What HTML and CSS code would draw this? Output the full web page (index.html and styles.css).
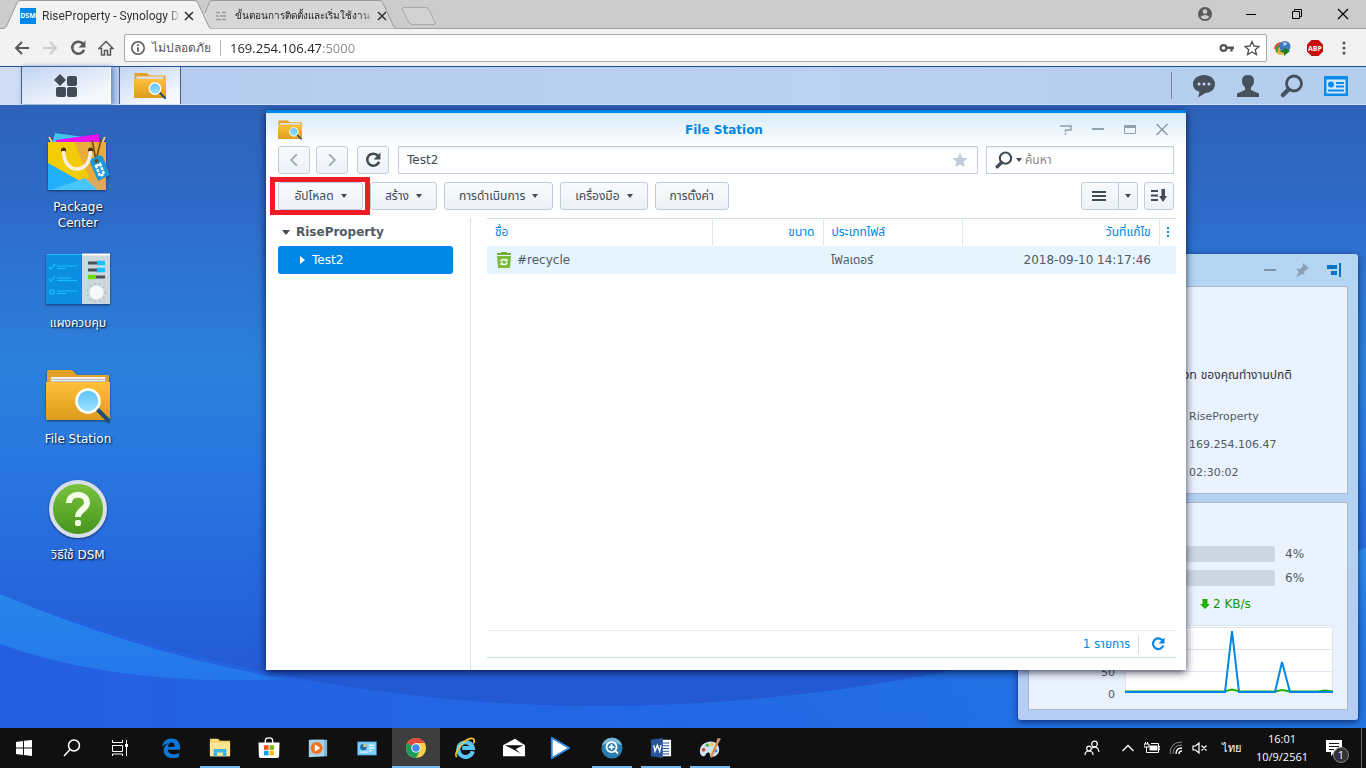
FILE: index.html
```html
<!DOCTYPE html>
<html lang="th">

<head>
	<meta charset="UTF-8">
	<meta name="viewport"
		content="width=device-width, initial-scale=1.0">
	<title>RiseProperty - Synology DiskStation</title>
	<link rel="stylesheet" href="styles.css">
</head>

<body>
	<!-- shared icons -->
	<svg class="defs" width="0" height="0">
		<defs>
			<linearGradient id="gFolder" x1="0" y1="0" x2="0" y2="1">
				<stop offset="0" stop-color="#ffc03c" />
				<stop offset="1" stop-color="#dd9c1c" />
			</linearGradient>
			<linearGradient id="gLens" x1="0" y1="0" x2="0" y2="1">
				<stop offset="0" stop-color="#5cc4f8" />
				<stop offset="1" stop-color="#9fe2ff" />
			</linearGradient>
			<symbol id="folder" viewBox="0 0 64 52">
				<path d="M1 2q0-2 2-2h22q1 0 2 1l4 4h31q1 0 1 1v8H1z" fill="#e3a127" />
				<path d="M5 7h54v6H5z" fill="#f2f2f2" />
				<path d="M4 9.500h56M4 11.500h56" stroke="#bbb" />
				<path d="M0 12h64v37q0 1-1 1H1q-1 0-1-1z" fill="url(#gFolder)" />
				<path d="M52 40l10 10" stroke="#1d4f72" stroke-width="4" stroke-linecap="round" />
				<circle cx="42" cy="31" r="11.500" fill="url(#gLens)" stroke="#fff" stroke-width="2.500" />
			</symbol>
			<symbol id="reload" viewBox="1 1 14 14">
				<path d="M12.500 4.500A5.300 5.300 0 1 0 13.300 9.500" fill="none" stroke="currentColor" stroke-width="2.200" />
				<path d="M14.500 1.500v6h-6z" fill="currentColor" />
			</symbol>
			<symbol id="caret" viewBox="0 0 6 4">
				<path d="M0 0h6L3 4z" fill="currentColor" />
			</symbol>
			<symbol id="lens" viewBox="0 0 24 24">
				<circle cx="14" cy="9.500" r="7.500" fill="none" stroke="currentColor" stroke-width="2.800" />
				<path d="M8.500 15.500L3 21" stroke="currentColor" stroke-width="4.500" stroke-linecap="round" />
			</symbol>
		</defs>
	</svg>

	<header class="browser">
		<div class="tabs">
			<div class="tab active">
				<svg class="tab-shape" viewBox="0 0 208 29" preserveAspectRatio="none">
					<path d="M0 28.500Q3 28 4 25L14 3Q15 .5 18 .5H191Q194 .5 195 3L205 25Q206 28 208 28.500V29H0z" fill="#f2f2f2" />
					<path d="M0 28.500Q3 28 4 25L14 3Q15 .5 18 .5H191Q194 .5 195 3L205 25Q206 28 208 28.500" fill="none" stroke="#999" />
				</svg>
				<span class="favicon">DSM</span>
				<span class="tab-title">RiseProperty - Synology D</span>
				<button class="tab-close" aria-label="Close tab"><svg viewBox="0 0 10 10"><path d="M1 1l8 8M9 1L1 9" stroke="#333" stroke-width="1.600" /></svg></button>
			</div>
			<div class="tab">
				<svg class="tab-shape" viewBox="0 0 208 29" preserveAspectRatio="none">
					<path d="M10 10L13 3Q14 .5 17 .5H183Q186 .5 187 3L197 25Q198 28 201 28.500H12L5 18z" fill="#d6d6d6" />
					<path d="M9 13L13 3Q14 .5 17 .5H183Q186 .5 187 3L197 25Q198 28 201 28.500" fill="none" stroke="#999" />
				</svg>
				<svg class="tab-list" viewBox="0 0 10 10"><path d="M0 1.500h4M6 1.500h4M0 5h3M4 5h6M0 8.500h5M6 8.500h4" stroke="#999" stroke-width="1.500" /></svg>
				<span class="tab-title thai">ขั้นตอนการติดตั้งและเริ่มใช้งาน</span>
				<button class="tab-close" aria-label="Close tab"><svg viewBox="0 0 10 10"><path d="M1 1l8 8M9 1L1 9" stroke="#333" stroke-width="1.600" /></svg></button>
			</div>
			<button class="new-tab" aria-label="New tab"><svg viewBox="0 0 36 18"><path d="M1 2q0-1.500 2-1.500h22q2 0 3 2l6 13q1 2-1 2H11q-2 0-3-2z" fill="#d2d2d2" stroke="#a8a8a8" /></svg></button>
			<div class="win-buttons">
				<button aria-label="Profile"><svg viewBox="0 0 16 16"><circle cx="8" cy="8" r="7" fill="#5a5a5a" /><circle cx="8" cy="5.600" r="2.300" fill="#ccc" /><path d="M3.500 11q4.500-4 9 0q-4.500 4.500-9 0" fill="#ccc" /></svg></button>
				<button aria-label="Minimize"><svg viewBox="0 0 16 16"><path d="M3 8.500h10" stroke="#000" /></svg></button>
				<button aria-label="Restore"><svg viewBox="0 0 16 16"><path d="M3.500 5.500h7v7h-7zM5.500 5V3.500h7v7H11" fill="none" stroke="#000" /></svg></button>
				<button aria-label="Close"><svg viewBox="0 0 16 16"><path d="M3 3l10 10M13 3L3 13" stroke="#000" stroke-width="1.200" /></svg></button>
			</div>
		</div>
		<div class="toolbar">
			<button aria-label="Back"><svg viewBox="0 0 16 16"><path d="M15 8H2M8 2L2 8l6 6" fill="none" stroke="#5a5a5a" stroke-width="2" /></svg></button>
			<button aria-label="Forward"><svg viewBox="0 0 16 16"><path d="M1 8h13M8 2l6 6-6 6" fill="none" stroke="#ccc" stroke-width="2" /></svg></button>
			<button class="grey" aria-label="Reload"><svg viewBox="0 0 16 16"><use href="#reload" /></svg></button>
			<button aria-label="Home"><svg viewBox="0 0 16 16"><path d="M1 8.500L8 1.500l7 7h-2.500V15h-3v-4.500h-3V15h-3V8.500z" fill="none" stroke="#5a5a5a" stroke-width="1.500" /></svg></button>
			<div class="address">
				<svg class="info" viewBox="0 0 16 16"><circle cx="8" cy="8" r="6.200" fill="none" stroke="#555" stroke-width="1.500" /><path d="M8 4.200v1.800M8 7.200v4.500" stroke="#555" stroke-width="1.700" /></svg>
				<label for="url">ไม่ปลอดภัย</label>
				<input id="url" type="text" value="169.254.106.47:5000">
				<svg class="key" viewBox="0 0 16 16"><circle cx="4.500" cy="8" r="2.900" fill="none" stroke="#555" stroke-width="2.200" /><path d="M8 7.700h7M12.500 8v3.500" stroke="#555" stroke-width="2.400" /></svg>
				<svg viewBox="0 0 16 16"><path d="M8 1.500l2 4.500 5 .5-3.700 3.300 1.100 4.700L8 12l-4.400 2.500 1.100-4.700L1 6.500 6 6z" fill="none" stroke="#555" stroke-width="1.400" /></svg>
			</div>
			<div class="extensions">
				<svg viewBox="0 0 18 16"><circle cx="7" cy="9" r="6" fill="#e5b43b" /><path d="M1 9q1-6 7-6" stroke="#d54a2f" stroke-width="2" fill="none" /><path d="M3 12q-1-5 4-7" stroke="#3a9b3c" stroke-width="2" fill="none" /><circle cx="11" cy="6.500" r="5.500" fill="#3f78c4" /><path d="M9 3q3-2 4 1l-3 2z" fill="#b5d9f1" /><path d="M5 11l5-1V7l6 4-6 5v-3z" fill="#188020" /></svg>
				<svg viewBox="0 0 18 18"><path d="M5.500 1h7L17 5.500v7L12.500 17h-7L1 12.500v-7z" fill="#c70d0d" /><text x="9" y="12" text-anchor="middle" class="abp">ABP</text></svg>
				<button aria-label="Menu"><svg viewBox="0 0 16 16"><g fill="#5a5a5a"><circle cx="6" cy="3" r="1.600" /><circle cx="6" cy="8" r="1.600" /><circle cx="6" cy="13" r="1.600" /></g></svg></button>
			</div>
		</div>
	</header>

	<nav class="dsm-bar">
		<span class="bar-edge"></span>
		<button class="bar-menu" aria-label="Main menu">
			<svg viewBox="0 0 24 24"><g fill="#414b55"><path d="M6 0l6 6-6 6-6-6z" /><rect x="13" y="2" width="10" height="10" rx="2" /><rect x="2" y="13" width="10" height="10" rx="2" /><rect x="13" y="13" width="10" height="10" rx="2" /></g></svg>
		</button>
		<button class="bar-app" aria-label="File Station"><svg viewBox="0 0 64 52"><use href="#folder" /></svg></button>
		<div class="bar-tray">
			<button aria-label="Notifications"><svg viewBox="0 0 24 24"><path d="M12 1c6 0 11 3.800 11 9s-4.500 9-9.500 9L6 23.500 7.500 18C3 16.500 1 13.500 1 10c0-5.200 5-9 11-9z" fill="#46515d" /><g fill="#bcd2ef"><circle cx="7" cy="10" r="1.500" /><circle cx="12" cy="10" r="1.500" /><circle cx="17" cy="10" r="1.500" /></g></svg></button>
			<button aria-label="Options"><svg viewBox="0 0 24 24"><path d="M12 1c4 0 6 2 6 5.500 0 3-1 5-3 7V16l8 3.500V23H1v-3.500L9 16v-2.500c-2-2-3-4-3-7C6 3 8 1 12 1z" fill="#46515d" /></svg></button>
			<button aria-label="Search"><svg viewBox="0 0 24 24"><use href="#lens" /></svg></button>
			<button aria-label="Widgets"><svg viewBox="0 0 24 24"><path d="M0 2h24v20H0z" fill="#0a8be8" /><path d="M2.500 5.500h19v14h-19z" fill="#d5e7fa" /><g fill="#0a8be8"><circle cx="7" cy="10.500" r="3" /><path d="M12 8h8v2h-8zM12 11.500h8v2h-8zM4 15.500h16v2H4z" /></g></svg></button>
		</div>
	</nav>

	<main class="desktop">
		<svg class="wallpaper" viewBox="0 0 1366 623" preserveAspectRatio="none">
			<defs>
				<linearGradient id="gLow" x1="0" y1="0" x2="1" y2="0">
					<stop offset="0" stop-color="#255fe0" />
					<stop offset=".5" stop-color="#2268e4" />
					<stop offset="1" stop-color="#2276e2" />
				</linearGradient>
				<linearGradient id="gSliver" x1="0" y1="0" x2="0" y2="1">
					<stop offset="0" stop-color="#2785ea" />
					<stop offset="1" stop-color="#2477ec" />
				</linearGradient>
				<linearGradient id="gSwoosh" x1="0" y1="0" x2="0" y2="1">
					<stop offset="0" stop-color="#2c8fea" stop-opacity=".9" />
					<stop offset="1" stop-color="#2268e4" stop-opacity="0" />
				</linearGradient>
			</defs>
			<path d="M0 489C200 565 400 601 600 601C850 601 1100 545 1366 443V623H0z" fill="url(#gLow)" />
			<path d="M600 601C850 601 1100 545 1366 443V623H600z" fill="url(#gSwoosh)" />
			<path d="M0 489Q140 548 285 574Q120 582 0 539z" fill="url(#gSliver)" />
		</svg>

		<div class="shortcuts">
			<a class="shortcut" href="#">
				<svg viewBox="0 -2 64 64">
					<path d="M6 11l3-10 44 6v4H6z" fill="#40c5f2" />
					<path d="M10 8l43-6 1 10H10z" fill="#ea12f2" />
					<path d="M3 5l3 5M59 5l-3 6" stroke="#e9cb8f" stroke-width="2" />
					<path d="M2 10h58v47q0 1-1 1H3q-1 0-1-1z" fill="#f3cc08" />
					<path d="M28 10h32v47H48z" fill="#e9ab3b" />
					<path d="M2 31l48 27H2z" fill="#22b0fb" />
					<path d="M5 58l34-12 13 12z" fill="#48c6fa" />
					<path d="M39 46l13 12h8V50z" fill="#dfa85c" />
					<circle cx="17.500" cy="18" r="2.500" fill="#503300" />
					<circle cx="44.500" cy="18" r="2.500" fill="#503300" />
					<path d="M17.500 19c0 24 27 24 27 0" fill="none" stroke="#fdf0df" stroke-width="3.500" />
					<path d="M46 8l4 20M55 8l-5 20" fill="none" stroke="#664a14" stroke-width="1.500" />
					<path d="M45 27l9-4 3 2 7 18-12 6-8-19z" fill="#1a9ad8" />
					<circle cx="50.500" cy="29" r="2" fill="#6b4d12" />
					<path d="M50 34l4-2 4 10-4 2z" fill="none" stroke="#fff" stroke-width="2.500" stroke-dasharray="3 1" />
				</svg>
				<span>Package Center</span>
			</a>
			<a class="shortcut" href="#">
				<svg viewBox="0 0 64 64">
					<rect y="8" width="36" height="50" fill="#0b8ee0" />
					<rect x="36" y="8" width="28" height="50" fill="#cdd7de" />
					<path d="M0 8.500h36" stroke="#22b8f2" /><path d="M36 8.500h28" stroke="#fff" stroke-width="2" />
					<g fill="none" stroke="#16c2fa" stroke-width="1.200"><path d="M3 21l2 2 4-5M3 33l2 2 4-5M4 44h4v4H4zM11 20h20M11 22.500h9M11 32h14M11 34.500h20M11 45h20M11 47.500h9" /></g>
					<path d="M42 17h17M42 24h17M42 31h17" stroke="#47525b" stroke-width="3" />
					<path d="M51 17h8M51 24h8" stroke="#19c0fb" stroke-width="4.500" />
					<path d="M42 31h8" stroke="#6fd808" stroke-width="4.500" />
					<circle cx="50.500" cy="46.500" r="9" fill="none" stroke="#9ba9b2" stroke-width="1.500" stroke-dasharray="1 4" />
					<circle cx="50.500" cy="46.500" r="7" fill="#f6f9fa" />
				</svg>
				<span>แผงควบคุม</span>
			</a>
			<a class="shortcut" href="#">
				<svg viewBox="0 0 64 64"><use href="#folder" y="8" width="64" height="52" /></svg>
				<span>File Station</span>
			</a>
			<a class="shortcut" href="#">
				<svg viewBox="0 0 64 64">
					<defs>
						<linearGradient id="gHelp" x1="0" y1="0" x2="0" y2="1">
							<stop offset="0" stop-color="#7cc440" />
							<stop offset="1" stop-color="#44931c" />
						</linearGradient>
					</defs>
					<circle cx="32" cy="31" r="27" fill="url(#gHelp)" stroke="#d8dfea" stroke-width="4" />
					<path d="M23 25c0-11 18-11 18 0 0 6-9 7-9 14" fill="none" stroke="#f4ffe8" stroke-width="6" />
					<rect x="29" y="42" width="6" height="6" rx="2" fill="#f4ffe8" />
				</svg>
				<span>วิธีใช้ DSM</span>
			</a>
		</div>

		<aside class="widgets">
			<div class="widget-head">
				<button aria-label="Minimize"><svg viewBox="0 0 16 16"><path d="M2 8h12" stroke="#7f95ab" stroke-width="2" /></svg></button>
				<button aria-label="Pin"><svg viewBox="0 0 16 16"><path d="M9 1l6 5-2 1-3 3 .5 3L8 12l-6 3 3-5-3-3h4l3-3z" fill="#8ba1b8" /></svg></button>
				<button aria-label="Dock right"><svg viewBox="0 0 16 16"><path d="M1 3h10v4H1zM5 9h6v4H5zM13 1h2v14h-2z" fill="#0a73c4" /></svg></button>
			</div>
			<section class="panel health">
				<p class="health-text">on ของคุณทำงานปกติ</p>
				<p class="health-value">RiseProperty</p>
				<p class="health-value">169.254.106.47</p>
				<p class="health-value">02:30:02</p>
			</section>
			<section class="panel monitor">
				<div class="meter"><span class="track"></span><span>4%</span></div>
				<div class="meter"><span class="track"></span><span>6%</span></div>
				<p class="speed"><svg viewBox="0 0 10 10"><path d="M2.500 0h5v5H10L5 10 0 5h2.500z" fill="#1eb000" /></svg>2 KB/s</p>
				<div class="chart">
					<div class="axis"><span>50</span><span>0</span></div>
					<svg viewBox="0 0 208 68" preserveAspectRatio="none">
						<path d="M.5 0V68H207.500V.5H0" fill="#fff" stroke="#dce6f0" />
						<path d="M0 2.500h208M0 24.500h208M0 46.500h208" stroke="#dce6f0" />
						<path d="M0 66.500h99l8-2 8 2h35l7-1.500 8 1.500h28l7-1 8 1" fill="none" stroke="#1eb000" stroke-width="2" />
						<path d="M0 67h100L107 6l7 61h36l7-30 8 30h43" fill="none" stroke="#0086e5" stroke-width="2" />
					</svg>
				</div>
			</section>
		</aside>

		<section class="window">
			<div class="window-head">
				<svg class="window-icon" viewBox="0 0 64 52"><use href="#folder" /></svg>
				<h1>File Station</h1>
				<div class="window-tools">
					<button aria-label="Help"><svg viewBox="0 0 14 14"><path d="M1 3h11v4H6.500v2M6.500 10v2" fill="none" stroke="#8fa0ae" stroke-width="1.500" /></svg></button>
					<button aria-label="Minimize"><svg viewBox="0 0 14 14"><path d="M1 6h12" stroke="#8fa0ae" stroke-width="2" /></svg></button>
					<button aria-label="Maximize"><svg viewBox="0 0 14 14"><path d="M1.500 3v7.500h11V3" fill="none" stroke="#8fa0ae" /><path d="M1 3.500h12" stroke="#8fa0ae" stroke-width="3" /></svg></button>
					<button aria-label="Close"><svg viewBox="0 0 14 14"><path d="M1.500 1l11 11M12.500 1l-11 11" stroke="#8fa0ae" stroke-width="1.700" /></svg></button>
				</div>
			</div>

			<div class="path-row">
				<button class="btn nav-btn" aria-label="Back"><svg viewBox="0 0 14 14"><path d="M9.500 2L4.500 7l5 5" fill="none" stroke="#98a4ad" stroke-width="1.500" /></svg></button>
				<button class="btn nav-btn" aria-label="Forward"><svg viewBox="0 0 14 14"><path d="M4.500 2l5 5-5 5" fill="none" stroke="#98a4ad" stroke-width="1.500" /></svg></button>
				<button class="btn nav-btn refresh" aria-label="Refresh"><svg viewBox="0 0 16 16"><use href="#reload" /></svg></button>
				<div class="field path">
					<input type="text" value="Test2" aria-label="Path">
					<svg viewBox="0 0 16 16"><path d="M8 .5l2.200 5.200 5.600.5-4.300 3.600 1.300 5.500L8 12.400l-4.800 2.900 1.300-5.500L.2 6.200l5.600-.5z" fill="#c0ccd8" /></svg>
				</div>
				<div class="field search">
					<svg class="search-icon" viewBox="0 0 24 24"><use href="#lens" /></svg>
					<svg class="caret"><use href="#caret" /></svg>
					<input type="text" placeholder="ค้นหา" aria-label="ค้นหา">
				</div>
			</div>

			<div class="action-row">
				<div class="highlighted">
					<button class="btn wide">อัปโหลด<svg class="caret"><use href="#caret" /></svg></button>
					<span class="highlight"></span>
				</div>
				<button class="btn">สร้าง<svg class="caret"><use href="#caret" /></svg></button>
				<button class="btn">การดำเนินการ<svg class="caret"><use href="#caret" /></svg></button>
				<button class="btn">เครื่องมือ<svg class="caret"><use href="#caret" /></svg></button>
				<button class="btn">การตั้งค่า</button>
				<div class="view-buttons">
					<button class="btn view-list" aria-label="List view"><svg viewBox="0 0 16 16"><path d="M0 4h14M0 8h14M0 12h14" stroke="#414b55" stroke-width="2" /></svg></button>
					<button class="btn view-more" aria-label="View options"><svg class="caret"><use href="#caret" /></svg></button>
					<button class="btn sort" aria-label="Sort"><svg viewBox="0 0 16 16"><path d="M0 3h7M0 7.500h7M0 12h7" stroke="#414b55" stroke-width="2" /><path d="M10.500 1h3.500v7H16l-4 6-4-6h2.500z" fill="#414b55" /></svg></button>
				</div>
			</div>

			<div class="window-body">
				<div class="tree">
					<div class="tree-root"><svg viewBox="0 0 8 5"><path d="M0 0h8L4 5z" fill="#414b55" /></svg>RiseProperty</div>
					<a class="tree-item" href="#"><svg viewBox="0 0 5 8"><path d="M0 0v8l5-4z" fill="#fff" /></svg>Test2</a>
				</div>
				<div class="files">
					<table>
						<colgroup>
							<col>
							<col class="col-size">
							<col class="col-type">
							<col class="col-date">
							<col class="col-menu">
						</colgroup>
						<thead>
							<tr>
								<th>ชื่อ</th>
								<th class="right">ขนาด</th>
								<th>ประเภทไฟล์</th>
								<th class="right">วันที่แก้ไข</th>
								<th class="more"><svg viewBox="0 0 3 10"><path d="M0 0h2v2H0zM0 4h2v2H0zM0 8h2v2H0z" fill="#0086e5" /></svg></th>
							</tr>
						</thead>
						<tbody>
							<tr>
								<td>
									<span class="file-name">
										<svg viewBox="0 0 14 16"><path d="M0 1h4V0h6v1h4v2H0z" fill="#6fae33" /><path d="M0 4h14l-1 12H1z" fill="#7cbb3b" /><path d="M4 9.500q0-2 3-2 1.500 0 2.500 1M10 10.500q0 2-3 2-1.500 0-2.500-1" fill="none" stroke="#fff" stroke-width="1.400" /><path d="M10.500 6.500v3h-3zM3.500 13.500v-3h3z" fill="#fff" /></svg>#recycle
									</span>
								</td>
								<td></td>
								<td>โฟลเดอร์</td>
								<td class="right">2018-09-10 14:17:46</td>
								<td></td>
							</tr>
						</tbody>
					</table>
					<div class="status">
						<span>1 รายการ</span>
						<button aria-label="Refresh"><svg viewBox="0 0 16 16"><use href="#reload" /></svg></button>
					</div>
				</div>
			</div>
		</section>
	</main>

	<footer class="taskbar">
		<div class="task-system">
			<button aria-label="Start"><svg viewBox="0 0 24 24"><path d="M4 6l7-1v6.500H4zM12 4.800L20 4v7.500h-8zM4 12.500h7V19l-7-1zM12 12.500h8V20l-8-1z" fill="#fff" /></svg></button>
			<button aria-label="Search"><svg viewBox="0 0 24 24"><circle cx="14" cy="9.500" r="5.500" fill="none" stroke="#fff" stroke-width="1.500" /><path d="M10 13.500L4 20" stroke="#fff" stroke-width="1.500" /></svg></button>
			<button aria-label="Task view"><svg viewBox="0 0 24 24"><path d="M4.500 4v2.500h10V4M4.500 9.500h10v6h-10zM4.500 20v-2h10v2M18.500 4v16" fill="none" stroke="#fff" /><path d="M17 8h3v3h-3z" fill="#fff" /></svg></button>
		</div>
		<div class="task-apps">
			<button aria-label="Edge"><svg viewBox="0 0 24 24"><path d="M2 11C3 5 7 1.500 12.500 1.500 19 1.500 22 6 22 11v3H8.500c.3 3.500 3 5 6.500 5 2.300 0 4.300-.6 6-1.700v4.200C19 22.600 17 23 14 23 8 23 4 20 4 14.500 4 11 6 8.500 9 7c-3 .3-5.500 2-7 4zM8.500 10.500H16c0-3-1.300-4.500-3.500-4.500S9 8 8.500 10.500z" fill="#0a78d7" /></svg></button>
			<button class="open" aria-label="File Explorer"><svg viewBox="0 0 24 24"><path d="M1 2h9l2 2h11v17H1z" fill="#f5cf5c" /><path d="M1 6h22v15H1z" fill="#ffe694" /><path d="M5 21v-8h14v8h-4v-4H9v4z" fill="#3fb4ea" /><path d="M3 3.500h6" stroke="#fff3b8" /></svg></button>
			<button aria-label="Store"><svg viewBox="0 0 24 24"><path d="M8 7V4q0-3 4-3t4 3v3" fill="none" stroke="#fff" stroke-width="1.500" /><path d="M.5 6h23l-.5 15q0 2-2 2H3q-2 0-2-2z" fill="#fff" /><path d="M6.500 9h5v5h-5z" fill="#f25022" /><path d="M12.500 9h5v5h-5z" fill="#7fba00" /><path d="M6.500 15h5v5h-5z" fill="#00a4ef" /><path d="M12.500 15h5v5h-5z" fill="#ffb900" /></svg></button>
			<button aria-label="Media Player"><svg viewBox="0 0 24 24"><path d="M5 3h17v18H5z" fill="#79b3d3" /><path d="M2 3h17v18l-17 1z" fill="#a7d3ea" /><circle cx="10.500" cy="12" r="6.500" fill="#f2731c" /><path d="M8.500 8l6 4-6 4z" fill="#fff" /></svg></button>
			<button aria-label="Control Panel"><svg viewBox="0 0 24 24"><path d="M1.500 5h21v15h-21z" fill="#55b8ee" /><path d="M2.500 6h19v13h-19z" fill="#7ed0f8" /><circle cx="8" cy="11" r="3.500" fill="#1d6fb0" /><path d="M8 11V7.500A3.500 3.500 0 0 1 11.500 11z" fill="#f3c45c" /><path d="M14 9h6M14 12h6M14 15h3M5 16.500h8" stroke="#e8f8ff" stroke-width="1.500" /></svg></button>
			<button class="open current" aria-label="Chrome"><svg viewBox="0 0 24 24"><circle cx="12" cy="12" r="11" fill="#fcd04b" /><path d="M12 12L2.500 6.500A11 11 0 0 1 21.500 6.500H12z" fill="#dc4b3e" /><path d="M2.500 6.500A11 11 0 0 0 12 23l4.500-8.500L12 12z" fill="#1b9e5a" /><circle cx="12" cy="12" r="5.200" fill="#fff" /><circle cx="12" cy="12" r="4.100" fill="#4688f4" /></svg></button>
			<button aria-label="Internet Explorer"><svg viewBox="0 0 24 24"><path d="M20.500 15.500A8 8 0 1 1 20.500 12H9" fill="none" stroke="#58c5f2" stroke-width="4.500" /><path d="M3 22C-2 17 14-1 21 2c2 1 1 4 0 5" fill="none" stroke="#f5c52c" stroke-width="1.800" /></svg></button>
			<button aria-label="Mail"><svg viewBox="1 1 24 22"><path d="M1 9L14 2l11 7v12H1z" fill="#fff" /><path d="M3 9h20l-8 4 5 5-7-4z" fill="#101010" /></svg></button>
			<button class="video" aria-label="Video"><svg viewBox="0 0 24 24"><path d="M3 1l19 11L3 23z" fill="#fff" stroke="#2f8fe0" stroke-width="2" stroke-linejoin="round" /></svg></button>
			<button class="open" aria-label="Magnifier"><svg viewBox="0 0 24 24"><circle cx="12" cy="12" r="11.500" fill="#2b7db0" /><path d="M1 9a11.500 11.500 0 0 1 22 0q-11-5-22 0" fill="#7ab5d6" /><circle cx="11.500" cy="11" r="5.500" fill="none" stroke="#fff" stroke-width="2" /><path d="M11.500 8v6M8.500 11h6M15.500 15l3 3" stroke="#fff" stroke-width="2" /></svg></button>
			<button class="open" aria-label="Word"><svg viewBox="0 0 24 24"><path d="M12 3h11v18H12z" fill="#fff" /><path d="M14 6.500h7M14 9.500h7M14 12.500h7M14 15.500h7M14 18.500h7" stroke="#2a5699" stroke-width="1.200" /><path d="M1 3l13-2v22L1 21z" fill="#2a5699" /><path d="M4 9l1.500 6.500L8 9l2.500 6.500L12 9" fill="none" stroke="#fff" stroke-width="1.500" /></svg></button>
			<button class="open" aria-label="Paint"><svg viewBox="0 0 24 24"><path d="M1 15C1 9 7 5 13 5s9 4 9 9-5 9-9 7c-2-1 0-4-3-4s-2 4-5 4-4-3-4-6z" fill="#cfe4f2" /><circle cx="5" cy="14" r="2" fill="#e03c31" /><circle cx="9" cy="9" r="2" fill="#5ab83c" /><circle cx="14" cy="8" r="1.800" fill="#f1c431" /><circle cx="18" cy="15" r="2" fill="#3c88d0" /><path d="M13 22L20 6" stroke="#e0903c" stroke-width="2.500" /><path d="M19 6l1-5 4 1-3 5z" fill="#c89868" /></svg></button>
		</div>
		<div class="tray">
			<button aria-label="People"><svg viewBox="0 0 16 16"><g fill="none" stroke="#fff" stroke-width="1.200"><circle cx="10.500" cy="4" r="2.800" /><circle cx="5" cy="8.500" r="2.300" /><path d="M1 15q0-4 4-4t4 4M8 8q6-3 7 4" /></g></svg></button>
			<button class="tray-up" aria-label="Hidden icons"><svg viewBox="0 0 16 16"><path d="M2.500 11L8 5.500l5.500 5.500" fill="none" stroke="#fff" stroke-width="1.300" /></svg></button>
			<button aria-label="Battery"><svg viewBox="0 0 16 16"><path d="M5.500 5.500h8v5h-8z" fill="#fff" /><path d="M4 12.500h10.500v-9H7M14.500 6.500H16v3h-1.500M0 4h5v3H0zM1.500 2v2M3.500 2v2M2.500 7v5.500H5" fill="none" stroke="#fff" /></svg></button>
			<button aria-label="Network"><svg viewBox="0 0 16 16"><g fill="none"><path d="M2 14Q2 2 14 2M5 14Q5 5 14 5" stroke="#8a8a8a" /><path d="M8 14Q8 8 14 8M11 14Q11 11 14 11" stroke="#fff" stroke-width="1.300" /></g></svg></button>
			<button aria-label="Volume"><svg viewBox="0 0 16 16"><path d="M1 6h2.500L7 3v10L3.500 10H1zM9.500 5.500l5 5M14.500 5.500l-5 5" fill="none" stroke="#fff" stroke-width="1.200" /></svg></button>
			<button class="lang">ไทย</button>
			<div class="clock"><span>16:01</span><span>10/9/2561</span></div>
			<button class="notice" aria-label="Notifications"><svg viewBox="0 0 16 16"><path d="M0 0h16v12H9l-4 4v-4H0z" fill="#fff" /><path d="M3 3.500h10M3 6.500h10M3 9.500h5" stroke="#101010" /></svg><span class="badge">1</span></button>
		</div>
	</footer>
</body>

</html>
```
FILE: styles.css
```css
:root {
	--blue: #0086e5;
	--text: #505a64;
	--line: #c0ccda;
	--ui: "DejaVu Sans", "Noto Sans", "Noto Sans Thai", sans-serif;
	--chrome: "Open Sans", "Noto Sans", sans-serif;
}

* {
	box-sizing: border-box;
}

body {
	margin: 0;
	min-height: 100vh;
	display: flex;
	flex-direction: column;
	font-family: var(--ui);
	font-size: 12px;
	color: var(--text);
	overflow: hidden;
}

button {
	display: flex;
	align-items: center;
	justify-content: center;
	margin: 0;
	padding: 0;
	border: 0;
	background: none;
	font: inherit;
	color: inherit;
	cursor: pointer;
}

input {
	min-width: 0;
	flex: 1;
	padding: 0;
	border: 0;
	outline: 0;
	background: none;
	font: inherit;
	color: inherit;
}

p {
	margin: 0;
}

svg {
	display: block;
	flex: none;
	width: 16px;
	height: 16px;
}

a {
	color: inherit;
	text-decoration: none;
}

.defs {
	position: absolute;
	width: 0;
	height: 0;
}

/* browser chrome */
.browser {
	font-family: var(--chrome);
	color: #333;
	background: #f2f2f2;
}

.tabs {
	display: flex;
	height: 29px;
	padding-left: 3px;
	background: #ccc;
	border-bottom: 1px solid #a0a0a0;
}

.tab {
	position: relative;
	display: flex;
	align-items: center;
	width: 208px;
	height: 29px;
	padding: 2px 14px 0 17px;
	margin-right: -15px;
}

.tab.active {
	z-index: 1;
}

.tab-shape {
	position: absolute;
	left: 0;
	top: 0;
	width: 100%;
	height: 100%;
}

.favicon,
.tab-title,
.tab-close,
.tab-list {
	position: relative;
}

.favicon {
	width: 16px;
	height: 16px;
	background: var(--blue);
	color: #fff;
	font-size: 7px;
	font-weight: 700;
	line-height: 16px;
	text-align: center;
}

.tab-list {
	width: 10px;
	height: 10px;
	margin: 0 3px;
}

.tab-title {
	flex: 1;
	margin-left: 6px;
	font-family: Roboto, "Open Sans", sans-serif;
	white-space: nowrap;
	-webkit-mask-image: linear-gradient(to right, #000 90%, transparent);
	mask-image: linear-gradient(to right, #000 90%, transparent);
}

.tab-title.thai {
	font-size: 10px;
	color: #222;
}

.tab-close {
	width: 16px;
	height: 16px;
}

.tab-close svg {
	width: 10px;
	height: 10px;
}

.new-tab {
	margin: 3px 0 0 12px;
}

.new-tab svg {
	width: 36px;
	height: 18px;
}

.win-buttons {
	display: flex;
	margin-left: auto;
}

.win-buttons button {
	width: 46px;
	height: 27px;
}

.toolbar {
	display: flex;
	align-items: center;
	height: 37px;
	padding: 0 12px 0 8px;
}

.toolbar > button {
	width: 28px;
	height: 28px;
}

.toolbar > button.grey {
	color: #5a5a5a;
}

.address {
	flex: 1;
	display: flex;
	align-items: center;
	gap: 9px;
	height: 28px;
	margin: 0 7px 0 4px;
	padding: 0 6px 0 5px;
	background: #fff;
	border: 1px solid #a8a8a8;
	border-radius: 2px;
}

.address .info {
	margin-right: -3px;
}

.address label {
	padding-right: 9px;
	border-right: 1px solid #bbb;
	line-height: 16px;
	color: #555;
}

/* host dark, port grey */
.address input {
	font-size: 13px;
	color: transparent;
	background: linear-gradient(to right, #222 91px, #888 91px);
	-webkit-background-clip: text;
	background-clip: text;
}

.extensions {
	display: flex;
	align-items: center;
	gap: 14px;
}

.extensions svg {
	width: 18px;
	height: 18px;
}

.extensions button svg {
	width: 16px;
	height: 16px;
}

.abp {
	font-size: 7px;
	font-weight: 700;
	fill: #fff;
}

/* DSM bar */
.dsm-bar {
	display: flex;
	height: 39px;
	border-top: 1px solid #1f4f95;
	border-bottom: 1px solid #d4e0f4;
	background: linear-gradient(to right, #b4caee, #bad2ef 60%, #b4cdec);
}

.bar-edge {
	width: 21px;
	background: #cfdcf4;
}

.bar-menu,
.bar-app {
	border-left: 1px solid #4b6280;
	border-right: 1px solid #fff;
	background: linear-gradient(160deg, #c2d4f2, #f5f8fe 80%);
}

.bar-menu {
	width: 90px;
	box-shadow: 2px 0 5px #5f7fb5;
}

.bar-menu svg {
	width: 24px;
	height: 24px;
}

.bar-app {
	width: 62px;
	margin-left: 8px;
	border-right-color: #4b6280;
}

.bar-app svg {
	width: 32px;
	height: 26px;
}

.bar-tray {
	display: flex;
	align-items: center;
	align-self: center;
	gap: 20px;
	height: 27px;
	margin-left: auto;
	padding: 0 18px 0 20px;
	border-left: 1px solid #7489a4;
	color: #46515d;
}

.bar-tray svg {
	width: 24px;
	height: 24px;
}

/* desktop */
.desktop {
	position: relative;
	flex: 1;
	overflow: hidden;
	background: linear-gradient(to bottom, #2d62b9 0, #2e6cca 18%, #2b80dc 42%, #2a78e0 56%, #2667dc 76%, #2258d2 95%);
}

.wallpaper {
	position: absolute;
	width: 100%;
	height: 100%;
}

.shortcuts {
	position: absolute;
	left: 28px;
	top: 25px;
	display: flex;
	flex-direction: column;
	width: 100px;
}

.shortcut {
	display: flex;
	flex-direction: column;
	align-items: center;
	gap: 5px;
	height: 116px;
	color: #fff;
	line-height: 16px;
	text-align: center;
	text-shadow: 1px 1px 2px #000;
}

.shortcut svg {
	width: 64px;
	height: 64px;
	filter: drop-shadow(0 1px 1px rgba(0, 0, 0, 0.5));
}

.shortcut span {
	width: 80px;
}

.widgets {
	position: absolute;
	right: 8px;
	top: 149px;
	width: 340px;
	padding: 0 10px 10px;
	background: linear-gradient(to bottom, #b4d6f3, #b5cdf4);
	border-radius: 3px;
	box-shadow: 0 2px 6px rgba(0, 0, 40, 0.6);
}

.widget-head {
	display: flex;
	align-items: center;
	justify-content: flex-end;
	gap: 16px;
	height: 32px;
	padding-right: 6px;
}

.panel {
	background: #eaf2fd;
	border: 1px solid #abb9c9;
}

.health {
	height: 208px;
	padding: 78px 0 0 160px;
	font-size: 11px;
}

.health-text {
	margin: 0 0 18px -7px;
	line-height: 20px;
	color: #333;
	font-size: 12px;
}

.health-value {
	line-height: 28px;
}

.monitor {
	height: 208px;
	margin-top: 8px;
	padding: 43px 14px 0 16px;
}

.meter {
	display: flex;
	align-items: center;
	gap: 10px;
	height: 16px;
	margin-bottom: 8px;
}

.track {
	width: 230px;
	height: 16px;
	border-radius: 2px;
	background: #cdd7e1;
}

.speed {
	display: flex;
	align-items: center;
	gap: 3px;
	height: 20px;
	padding-left: 155px;
	color: #169600;
}

.speed svg {
	width: 10px;
	height: 10px;
}

.chart {
	display: flex;
	gap: 10px;
	margin-top: 11px;
}

.chart svg {
	flex: 1;
	height: 68px;
}

.axis {
	display: flex;
	flex-direction: column;
	justify-content: flex-end;
	gap: 6px;
	width: 70px;
	height: 78px;
	font-size: 11px;
	line-height: 16px;
	text-align: right;
}

/* File Station window */
.window {
	position: absolute;
	left: 266px;
	top: 5px;
	display: flex;
	flex-direction: column;
	width: 920px;
	height: 560px;
	background: #fff;
	border-top: 3px solid var(--blue);
	box-shadow: 0 2px 8px rgba(0, 0, 30, 0.75);
}

.window-head {
	display: grid;
	grid-template-columns: 1fr auto 1fr;
	align-items: center;
	height: 33px;
	padding: 0 16px 0 12px;
	background: linear-gradient(to bottom, #d6ebf9, #fff);
}

.window-head h1 {
	margin: 0;
	font-size: 12px;
	color: var(--blue);
}

.window-icon {
	width: 24px;
	height: 20px;
}

.window-tools {
	display: flex;
	justify-content: flex-end;
	gap: 16px;
}

.window-tools button {
	width: 16px;
	height: 16px;
}

.window-tools svg {
	width: 14px;
	height: 14px;
}

.path-row,
.action-row {
	display: flex;
	padding: 0 12px;
}

.path-row {
	gap: 6px;
}

.action-row {
	gap: 7px;
	margin: 8px 0;
}

.btn {
	height: 28px;
	padding: 0 14px;
	gap: 7px;
	border: 1px solid var(--line);
	border-radius: 3px;
	background: linear-gradient(to bottom, #f8fafd, #edf2f7);
	white-space: nowrap;
	color: #414b55;
}

.btn.nav-btn {
	width: 32px;
	padding: 0;
}

.btn.refresh {
	margin: 0 3px;
}

.caret {
	width: 6px;
	height: 4px;
}

.field {
	display: flex;
	align-items: center;
	height: 28px;
	padding: 0 8px;
	border: 1px solid var(--line);
	box-shadow: inset 0 1px 1px #edf1f5;
	color: #414b55;
}

.field.path {
	flex: 1;
	margin-right: 2px;
	padding-right: 9px;
}

.field.search {
	width: 188px;
	gap: 3px;
}

.search-icon {
	width: 18px;
	height: 18px;
}

.field input::placeholder {
	color: #888;
	opacity: 1;
}

.highlighted {
	position: relative;
	display: flex;
}

.btn.wide {
	width: 85px;
}

.highlight {
	position: absolute;
	top: -5px;
	right: -7px;
	bottom: -5px;
	left: -8px;
	border: 5px solid #ed1c24;
	pointer-events: none;
}

.view-buttons {
	display: flex;
	margin-left: auto;
}

.btn.view-list {
	width: 38px;
	padding: 0;
	border-radius: 3px 0 0 3px;
}

.btn.view-more {
	width: 20px;
	margin-left: -1px;
	padding: 0;
	border-radius: 0 3px 3px 0;
}

.btn.sort {
	width: 30px;
	margin-left: 6px;
	padding: 0;
}

.window-body {
	flex: 1;
	display: flex;
}

.tree {
	width: 205px;
	padding: 0 17px 0 12px;
	border-right: 1px solid #dce0e4;
}

.tree-root,
.tree-item {
	display: flex;
	align-items: center;
	height: 28px;
}

.tree-root {
	gap: 6px;
	padding-left: 4px;
	font-weight: 700;
}

.tree-root svg {
	width: 8px;
	height: 5px;
}

.tree-item {
	gap: 7px;
	padding-left: 22px;
	border-radius: 3px;
	background: var(--blue);
	color: #fff;
}

.tree-item svg {
	width: 5px;
	height: 8px;
}

.files {
	flex: 1;
	display: flex;
	flex-direction: column;
	padding: 0 10px 12px 16px;
}

table {
	width: 100%;
	table-layout: fixed;
	border-collapse: collapse;
	border-top: 1px solid #d3e0ea;
}

.col-size {
	width: 111px;
}

.col-type {
	width: 139px;
}

.col-date {
	width: 197px;
}

.col-menu {
	width: 17px;
}

th,
td {
	height: 27px;
	padding: 0 8px;
	text-align: left;
	white-space: nowrap;
}

th {
	border-right: 1px solid #dfe8f1;
	font-weight: 400;
	color: var(--blue);
}

th:last-child {
	border: 0;
}

td {
	height: 28px;
	background: #e6f4fe;
}

th.right,
td.right {
	text-align: right;
}

.more {
	padding: 0 7px;
}

.more svg {
	width: 3px;
	height: 10px;
}

.file-name {
	display: flex;
	align-items: center;
	gap: 6px;
	padding-left: 2px;
}

.file-name svg {
	width: 14px;
	height: 16px;
}

.status {
	display: flex;
	align-items: center;
	justify-content: flex-end;
	height: 28px;
	margin-top: auto;
	border-top: 1px solid #e4ebf2;
	border-bottom: 1px solid #ccdae3;
	color: var(--blue);
}

.status button {
	width: 38px;
	height: 19px;
	margin-left: 8px;
	border-left: 1px solid #d2dee8;
}

.status svg {
	width: 14px;
	height: 14px;
}

/* Windows taskbar */
.taskbar {
	display: flex;
	justify-content: space-between;
	height: 40px;
	background: #101010;
	color: #fff;
	font-family: var(--chrome);
	font-size: 11px;
}

.task-system {
	display: flex;
}

.task-apps {
	display: flex;
	flex: 1;
	gap: 1px;
	margin-left: 3px;
}

.task-system button,
.task-apps button {
	width: 48px;
	height: 40px;
}

.task-apps svg {
	width: 22px;
	height: 22px;
}

.task-apps .open {
	background: linear-gradient(#76b9ed, #76b9ed) center bottom / 40px 2px no-repeat;
}

.task-apps .current {
	background: linear-gradient(#76b9ed, #76b9ed) center bottom / 48px 2px no-repeat #3e3e3e;
}

.task-apps .video {
	padding-right: 6px;
}

.task-system svg {
	width: 24px;
	height: 24px;
}

.tray {
	display: flex;
	align-items: center;
}

.tray > button {
	width: 24px;
	height: 40px;
}

.tray .tray-up {
	margin-left: 12px;
}

.tray > .lang {
	width: 38px;
}

.clock {
	display: flex;
	flex-direction: column;
	align-items: center;
	width: 64px;
	line-height: 18px;
}

.tray > .notice {
	position: relative;
	width: 48px;
	margin-right: 4px;
	padding-right: 8px;
	border-right: 1px solid #666;
}

.badge {
	position: absolute;
	right: 12px;
	bottom: 5px;
	width: 16px;
	height: 16px;
	border: 1px solid #888;
	border-radius: 50%;
	background: #333;
	line-height: 14px;
}
```
